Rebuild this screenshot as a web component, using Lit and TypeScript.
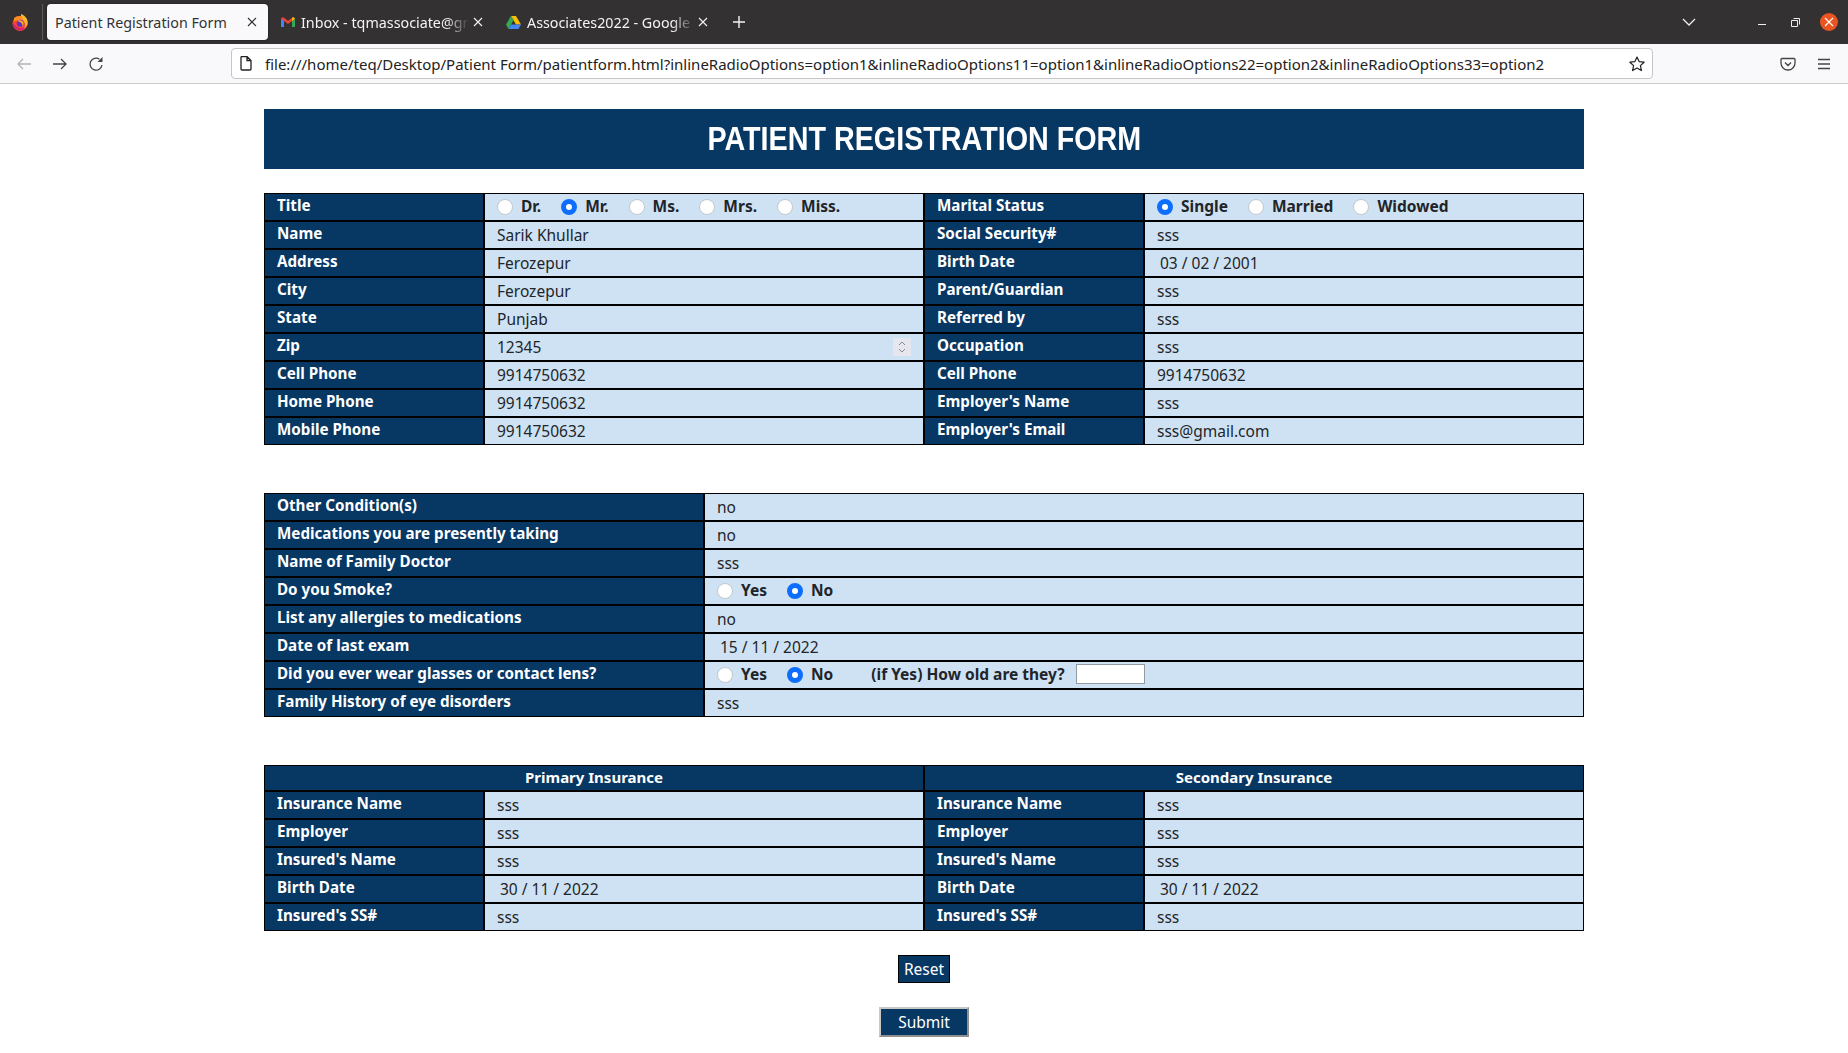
import { LitElement, html, css, svg, nothing } from "lit";
import { customElement } from "lit/decorators.js";

type Cell =
  | { k: "text"; v: string }
  | { k: "date"; v: string }
  | { k: "number"; v: string }
  | { k: "radio"; opts: string[]; sel: number; extra?: boolean };

const t = (v: string): Cell => ({ k: "text", v });
const d = (v: string): Cell => ({ k: "date", v });

const table1: [string, Cell, string, Cell][] = [
  ["Title", { k: "radio", opts: ["Dr.", "Mr.", "Ms.", "Mrs.", "Miss."], sel: 1 }, "Marital Status", { k: "radio", opts: ["Single", "Married", "Widowed"], sel: 0 }],
  ["Name", t("Sarik Khullar"), "Social Security#", t("sss")],
  ["Address", t("Ferozepur"), "Birth Date", d("03 / 02 / 2001")],
  ["City", t("Ferozepur"), "Parent/Guardian", t("sss")],
  ["State", t("Punjab"), "Referred by", t("sss")],
  ["Zip", { k: "number", v: "12345" }, "Occupation", t("sss")],
  ["Cell Phone", t("9914750632"), "Cell Phone", t("9914750632")],
  ["Home Phone", t("9914750632"), "Employer's Name", t("sss")],
  ["Mobile Phone", t("9914750632"), "Employer's Email", t("sss@gmail.com")],
];

const table2: [string, Cell][] = [
  ["Other Condition(s)", t("no")],
  ["Medications you are presently taking", t("no")],
  ["Name of Family Doctor", t("sss")],
  ["Do you Smoke?", { k: "radio", opts: ["Yes", "No"], sel: 1 }],
  ["List any allergies to medications", t("no")],
  ["Date of last exam", d("15 / 11 / 2022")],
  ["Did you ever wear glasses or contact lens?", { k: "radio", opts: ["Yes", "No"], sel: 1, extra: true }],
  ["Family History of eye disorders", t("sss")],
];

const table3: [string, Cell, string, Cell][] = [
  ["Insurance Name", t("sss"), "Insurance Name", t("sss")],
  ["Employer", t("sss"), "Employer", t("sss")],
  ["Insured's Name", t("sss"), "Insured's Name", t("sss")],
  ["Birth Date", d("30 / 11 / 2022"), "Birth Date", d("30 / 11 / 2022")],
  ["Insured's SS#", t("sss"), "Insured's SS#", t("sss")],
];

const X = svg`<path d="M1 1l8 8M9 1l-8 8" fill="none" stroke="currentColor" stroke-width="1.1"/>`;

@customElement("browser-chrome")
class BrowserChrome extends LitElement {
  static styles = css`
    :host { display: block; font-family: "Noto Sans", "Open Sans", sans-serif; }
    .tabs { height: 44px; background: #333132; display: flex; align-items: center; color: #fff; }
    .ff { width: 43px; height: 36px; display: flex; align-items: center; justify-content: center; border-right: 1px solid #5a5a5a; box-sizing: border-box; margin-right: 4px; flex: none; padding-right: 2px; }
    .tab { height: 36px; box-sizing: border-box; display: flex; align-items: center; font-size: 14.3px; flex: none; }
    .tab.on { width: 221px; background: #f9f9fb; color: #333; border-radius: 4px; padding: 0 11px 0 8px; justify-content: space-between; margin-right: 13px; box-shadow: 0 0 3px rgba(0,0,0,.5); }
    .tab.off { color: #f4f4f4; gap: 6px; }
    .tab.mail { width: 225px; }
    .tab.drive { width: 226px; }
    .tab .lbl { white-space: nowrap; width: 168px; overflow: visible; -webkit-mask-image: linear-gradient(to right, #000 86%, transparent); mask-image: linear-gradient(to right, #000 86%, transparent); }
    .tab.mail svg.x { margin-left: -2px; }
    .tab.drive svg.x { margin-left: -3px; }
    .tab svg.x { width: 10px; height: 10px; flex: none; }
    .plus { width: 14px; height: 14px; flex: none; }
    .grow { flex: 1; }
    .chev { width: 16px; height: 10px; margin-right: 61px; flex: none; }
    .win { display: flex; align-items: center; margin-right: 10px; }
    .min { width: 8px; height: 1px; background: #eee; margin-top: 4px; margin-right: 25px; }
    .rest { margin-right: 20px; }
    .close { width: 18px; height: 18px; background: #e95420; border-radius: 50%; display: flex; align-items: center; justify-content: center; color: #fff; }
    .tools { height: 39px; background: #f9f9fb; border-bottom: 1px solid #ccc; display: flex; align-items: center; color: #555; }
    .nav { display: flex; align-items: center; width: 231px; gap: 20px; padding-left: 16px; box-sizing: border-box; flex: none; }
    .nav svg { width: 16px; height: 16px; flex: none; }
    .url { width: 1422px; height: 31px; box-sizing: border-box; background: #fff; border: 1px solid #c6c6c8; border-radius: 4px; display: flex; align-items: center; padding: 0 7px 0 8px; color: #222; font-size: 15px; flex: none; }
    .url .addr { flex: 1; margin-left: 13px; padding-top: 1px; white-space: nowrap; overflow: hidden; }
    .url svg { flex: none; }
    .right { display: flex; align-items: center; gap: 20px; margin-left: 127px; }
    .right svg { width: 16px; height: 16px; }
  `;
  render() {
    return html`
      <div class="tabs">
        <div class="ff">
          <svg width="17" height="17" viewBox="0 0 17 17">
            <circle cx="8" cy="9.500" r="7.500" fill="#f5462f"/>
            <path d="M.7 9.500A7.500 7.500 0 0 0 15 12c-3 3-8 3-11 0-1.500-1.500-2-3-3.300-2.500z" fill="#d8236f"/>
            <path d="M9 0c5 2 7.500 6 6.500 10.500C14.500 13 13 14 12 14.500c2-2.500 1.500-5.500-.5-7.500C10 5.500 8.500 3 9 0z" fill="#ffb52e"/>
            <path d="M2 4c2-1.500 5-2.500 8-1.500-.5 1.500 1 3 2 4.500-3-1.500-7-1-10 .5z" fill="#ff8a1f"/>
            <circle cx="8.300" cy="9.300" r="3.500" fill="#5c2fc9"/>
            <path d="M5 7c2-1.500 5-1 6.300 1 .8 1.800.2 3.500-1 4.500.7-2.500-.8-4.500-5.300-5.500z" fill="#ffa726"/>
          </svg>
        </div>
        <div class="tab on"><span>Patient Registration Form</span><svg class="x" viewBox="0 0 10 10">${X}</svg></div>
        <div class="tab off mail">
          <svg width="14" height="12" viewBox="0 0 14 12" style="flex:none">
            <path d="M0 2.500V11h3V5l4 3 4-3v6h3V2.500L12 1 7 4.800 2 1z" fill="#ea4335"/>
            <path d="M0 2.500V11h3V5z" fill="#4285f4"/>
            <path d="M11 5v6h3V2.500z" fill="#34a853"/>
            <path d="M12 1l2 1.500L11 5V2.500z" fill="#fbbc04"/>
          </svg>
          <span class="lbl">Inbox - tqmassociate@gm</span>
          <svg class="x" viewBox="0 0 10 10">${X}</svg>
        </div>
        <div class="tab off drive">
          <svg width="15" height="13" viewBox="0 0 15 13" style="flex:none">
            <path d="M5 0h5l5 8.500h-5z" fill="#fbbc04"/>
            <path d="M5 0l2.500 4.300L2.500 13 0 8.500z" fill="#34a853"/>
            <path d="M5 8.500h10L12.500 13h-10z" fill="#4285f4"/>
          </svg>
          <span class="lbl">Associates2022 - Google</span>
          <svg class="x" viewBox="0 0 10 10">${X}</svg>
        </div>
        <svg class="plus" viewBox="0 0 14 14"><path d="M7 1v12M1 7h12" stroke="#f4f4f4" stroke-width="1.400"/></svg>
        <div class="grow"></div>
        <svg class="chev" viewBox="0 0 16 10"><path d="M2 2l6 6 6-6" fill="none" stroke="#eee" stroke-width="1.300"/></svg>
        <div class="win">
          <div class="min"></div>
          <svg class="rest" width="9" height="9" viewBox="0 0 9 9"><path d="M.5 2.500h6v6h-6zM2.500 .5h6v6" fill="none" stroke="#eee"/></svg>
          <div class="close"><svg width="10" height="10" viewBox="0 0 10 10">${X}</svg></div>
        </div>
      </div>
      <div class="tools">
        <div class="nav">
          <svg viewBox="0 0 16 16"><path d="M15 8H2M7 3L2 8l5 5" fill="none" stroke="#b3b3b5" stroke-width="1.300"/></svg>
          <svg viewBox="0 0 16 16"><path d="M1 8h13M9 3l5 5-5 5" fill="none" stroke="#444" stroke-width="1.300"/></svg>
          <svg viewBox="0 0 16 16"><path d="M14 9A6 6 0 1 1 11.500 3.200" fill="none" stroke="#444" stroke-width="1.300"/><path d="M14.500 1v5h-5z" fill="#444"/></svg>
        </div>
        <div class="url">
          <svg width="12" height="15" viewBox="0 0 12 15"><path d="M1 1.500a1 1 0 0 1 1-1h5L11 4.500V13a1 1 0 0 1-1 1H2a1 1 0 0 1-1-1zM7 .5v4h4" fill="none" stroke="#222" stroke-width="1.300"/></svg>
          <span class="addr">file:///home/teq/Desktop/Patient Form/patientform.html?inlineRadioOptions=option1&inlineRadioOptions11=option1&inlineRadioOptions22=option2&inlineRadioOptions33=option2</span>
          <svg width="16" height="16" viewBox="0 0 16 16"><path d="M8 1l2.100 4.600 5 .6-3.700 3.400 1 5L8 12.100 3.600 14.600l1-5L.9 6.200l5-.6z" fill="none" stroke="#222" stroke-width="1.200" stroke-linejoin="round"/></svg>
        </div>
        <div class="right">
          <svg viewBox="0 0 16 16"><path d="M2 2.500h12a1 1 0 0 1 1 1V7a7 7 0 0 1-14 0V3.500a1 1 0 0 1 1-1zM5 6.500l3 3 3-3" fill="none" stroke="#444" stroke-width="1.300"/></svg>
          <svg viewBox="0 0 16 16"><path d="M2 3.500h12M2 8h12M2 12.500h12" stroke="#444" stroke-width="1.300"/></svg>
        </div>
      </div>
    `;
  }
}

@customElement("app-root")
class AppRoot extends LitElement {
  static styles = css`
    :host { display: block; background: #fff; font-family: "Noto Sans", "Open Sans", sans-serif; }
    .page { width: 1320px; margin: 0 auto; padding-top: 25px; display: flex; flex-direction: column; align-items: stretch; }
    h1 { margin: 0 0 24px; height: 60px; background: #073763; color: #fff; display: flex; align-items: center; justify-content: center; font: bold 33px "Liberation Sans", sans-serif; }
    h1 span { display: inline-block; transform: scaleX(.87); white-space: nowrap; }
    .tbl { display: grid; gap: 2px; padding: 1px; background: #000; margin-bottom: 48px; }
    .tbl.four { grid-template-columns: 218px 438px 218px 438px; }
    .tbl.two { grid-template-columns: 438px 878px; }
    .tbl.last { margin-bottom: 24px; }
    .lab { background: #073763; color: #fff; font-weight: 700; font-size: 15.2px; height: 26px; line-height: 22px; padding-left: 12px; box-sizing: border-box; white-space: nowrap; }
    .head { grid-column: span 2; background: #073763; color: #fff; font-weight: 700; font-size: 15px; height: 24px; line-height: 22px; text-align: center; }
    .val { background: #cfe2f3; height: 26px; display: flex; align-items: center; padding-left: 12px; box-sizing: border-box; color: #212529; font-size: 15.5px; }
    .val input.txt { border: 0; outline: 0; background: transparent; padding: 0; margin: 0; font: inherit; color: inherit; flex: 1; min-width: 0; height: 100%; }
    .val.date { padding-left: 15px; }
    .spin { width: 18px; height: 18px; background: #e6e7ee; margin-right: 12px; flex: none; display: flex; align-items: center; justify-content: center; }
    .opt { display: inline-flex; align-items: center; font-weight: 700; gap: 8px; margin-right: 20px; white-space: nowrap; padding-bottom: 3px; }
    .opt input { appearance: none; width: 16px; height: 16px; margin: 2px 0 0; border-radius: 50%; background: #fff; border: 1px solid #c4c8cc; box-sizing: border-box; flex: none; }
    .opt input:checked { background: #fff; border: 5px solid #0d6efd; }
    .extra { font-weight: 700; margin-left: 18px; white-space: nowrap; padding-bottom: 3px; }
    .age { width: 69px; height: 20px; box-sizing: border-box; border: 1px solid #8f9aa5; background: #fff; margin: 0 0 2px 11px; padding: 0; }
    .btns { display: flex; flex-direction: column; align-items: center; gap: 24px; padding-bottom: 10px; }
    button { font: 15.5px "Noto Sans", "Open Sans", sans-serif; color: #fff; background: #073763; margin: 0; padding: 0; cursor: pointer; }
    .reset { width: 52px; height: 28px; border: 1px solid #000; }
    .submit { width: 90px; height: 30px; border: 2px solid; border-color: #c8c8c8 #8f8f8f #8f8f8f #c8c8c8; }
  `;

  private n = 0;

  cell(c: Cell) {
    if (c.k === "radio") {
      const name = "r" + this.n++;
      return html`<div class="val">
        ${c.opts.map((o, i) => html`<label class="opt"><input type="radio" name=${name} .checked=${i === c.sel} />${o}</label>`)}
        ${c.extra ? html`<span class="extra">(if Yes) How old are they?</span><input class="age" />` : nothing}
      </div>`;
    }
    if (c.k === "number") {
      return html`<div class="val"><input class="txt" .value=${c.v} />
        <span class="spin"><svg width="8" height="14" viewBox="0 0 8 14"><path d="M1 5l3-3 3 3M1 9l3 3 3-3" fill="none" stroke="#8a8a96" stroke-width="1"/></svg></span></div>`;
    }
    return html`<div class="val ${c.k === "date" ? "date" : ""}"><input class="txt" .value=${c.v} /></div>`;
  }

  render() {
    return html`
      <browser-chrome></browser-chrome>
      <form class="page" @submit=${(e: Event) => e.preventDefault()}>
        <h1><span>PATIENT REGISTRATION FORM</span></h1>
        <div class="tbl four">
          ${table1.map((r) => html`<div class="lab">${r[0]}</div>${this.cell(r[1])}<div class="lab">${r[2]}</div>${this.cell(r[3])}`)}
        </div>
        <div class="tbl two">
          ${table2.map((r) => html`<div class="lab">${r[0]}</div>${this.cell(r[1])}`)}
        </div>
        <div class="tbl four last">
          <div class="head">Primary Insurance</div><div class="head">Secondary Insurance</div>
          ${table3.map((r) => html`<div class="lab">${r[0]}</div>${this.cell(r[1])}<div class="lab">${r[2]}</div>${this.cell(r[3])}`)}
        </div>
        <div class="btns">
          <button type="button" class="reset">Reset</button>
          <button type="submit" class="submit">Submit</button>
        </div>
      </form>
    `;
  }
}
